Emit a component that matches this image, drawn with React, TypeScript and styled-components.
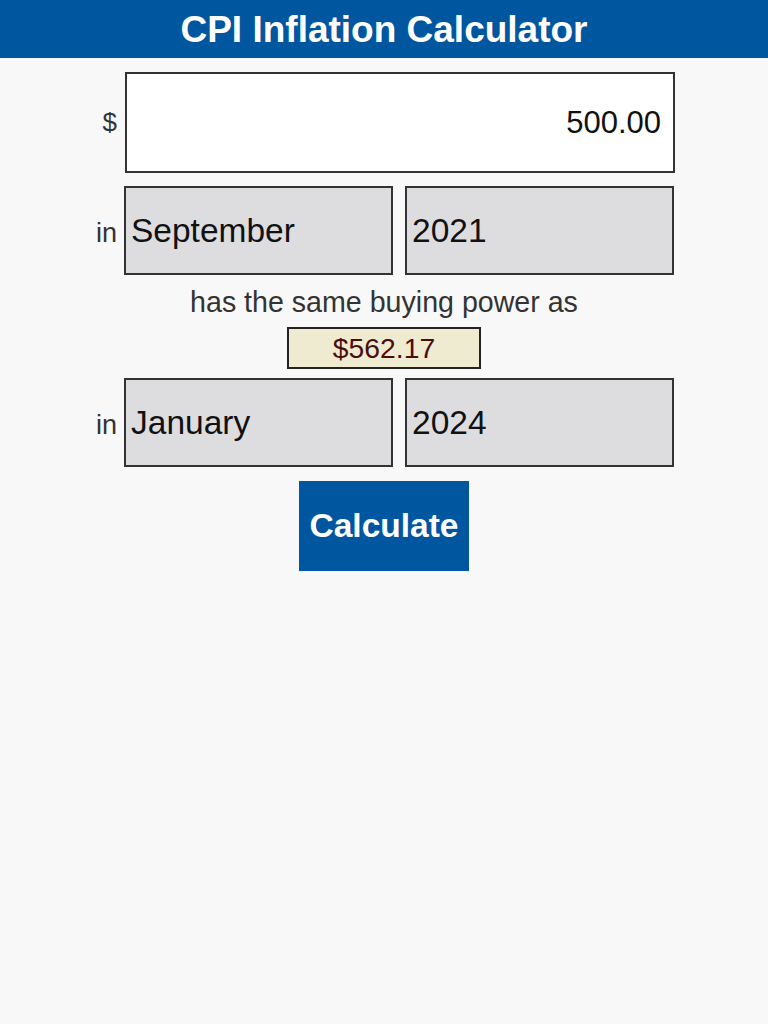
import React, { useState } from "react";
import styled, { createGlobalStyle } from "styled-components";

const GlobalStyle = createGlobalStyle`
  html, body {
    margin: 0;
    padding: 0;
    background: #f8f8f8;
    font-family: "Liberation Sans", Arial, Helvetica, sans-serif;
  }
`;

const Page = styled.div`
  min-height: 1024px;
  display: flex;
  flex-direction: column;
  align-items: center;
  background: #f8f8f8;
`;

const Header = styled.header`
  align-self: stretch;
  height: 58px;
  background: #0156a0;
  display: flex;
  align-items: center;
  justify-content: center;
`;

const Title = styled.h1`
  margin: 0;
  color: #ffffff;
  font-size: 37px;
  font-weight: 700;
  line-height: 1;
`;

const Form = styled.form`
  width: 582px;
  margin-top: 14px;
  display: flex;
  flex-direction: column;
  align-items: center;
`;

const Row = styled.div<{ $gap: number; $height: number }>`
  align-self: stretch;
  margin-top: ${(p) => p.$gap}px;
  display: grid;
  grid-template-columns: 24px 1fr;
  column-gap: 8px;
  height: ${(p) => p.$height}px;
`;

const Label = styled.label<{ $size: number; $drop: number }>`
  display: flex;
  align-items: center;
  justify-content: flex-end;
  padding-top: ${(p) => p.$drop}px;
  color: #333333;
  font-size: ${(p) => p.$size}px;
`;

const AmountInput = styled.input`
  box-sizing: border-box;
  width: 100%;
  height: 100%;
  margin: 0;
  border: 2px solid #333333;
  background: #ffffff;
  color: #111111;
  font-family: inherit;
  font-size: 31px;
  text-align: right;
  padding: 0 12px 0 5px;
  outline: none;
`;

const Pair = styled.div`
  display: grid;
  grid-template-columns: 1fr 1fr;
  column-gap: 12px;
  margin-left: -1px;
  margin-right: 1px;
`;

const Select = styled.select`
  box-sizing: border-box;
  width: 100%;
  height: 100%;
  margin: 0;
  border: 2px solid #333333;
  border-radius: 0;
  background: #dddde0;
  color: #111111;
  font-family: inherit;
  font-size: 33.5px;
  padding: 0 5px;
  appearance: none;
  -webkit-appearance: none;
  outline: none;
`;

const Caption = styled.p`
  margin: 10px 0 0;
  height: 34px;
  line-height: 34px;
  color: #333333;
  font-size: 28.6px;
  text-align: center;
`;

const Result = styled.output`
  box-sizing: border-box;
  margin-top: 8px;
  width: 194px;
  height: 42px;
  border: 2px solid #222222;
  background: #efebd0;
  color: #4b0d0d;
  font-size: 28.3px;
  display: flex;
  align-items: center;
  justify-content: center;
`;

const CalcButton = styled.button`
  margin-top: 14px;
  width: 170px;
  height: 90px;
  border: none;
  border-radius: 0;
  background: #0156a0;
  color: #ffffff;
  font-family: inherit;
  font-size: 33.5px;
  font-weight: 700;
  cursor: pointer;
`;

const MONTHS = [
  "January", "February", "March", "April", "May", "June",
  "July", "August", "September", "October", "November", "December",
];
const YEARS = Array.from({ length: 2024 - 1913 + 1 }, (_, i) => String(1913 + i));

export default function App() {
  const [amount, setAmount] = useState("500.00");
  const [fromMonth, setFromMonth] = useState("September");
  const [fromYear, setFromYear] = useState("2021");
  const [toMonth, setToMonth] = useState("January");
  const [toYear, setToYear] = useState("2024");

  return (
    <Page>
      <GlobalStyle />
      <Header>
        <Title>CPI Inflation Calculator</Title>
      </Header>
      <Form onSubmit={(e) => e.preventDefault()}>
        <Row $gap={0} $height={101}>
          <Label $size={26} $drop={0}>$</Label>
          <AmountInput value={amount} onChange={(e) => setAmount(e.target.value)} />
        </Row>
        <Row $gap={13} $height={89}>
          <Label $size={27} $drop={5}>in</Label>
          <Pair>
            <Select value={fromMonth} onChange={(e) => setFromMonth(e.target.value)}>
              {MONTHS.map((m) => <option key={m}>{m}</option>)}
            </Select>
            <Select value={fromYear} onChange={(e) => setFromYear(e.target.value)}>
              {YEARS.map((y) => <option key={y}>{y}</option>)}
            </Select>
          </Pair>
        </Row>
        <Caption>has the same buying power as</Caption>
        <Result>$562.17</Result>
        <Row $gap={9} $height={89}>
          <Label $size={27} $drop={5}>in</Label>
          <Pair>
            <Select value={toMonth} onChange={(e) => setToMonth(e.target.value)}>
              {MONTHS.map((m) => <option key={m}>{m}</option>)}
            </Select>
            <Select value={toYear} onChange={(e) => setToYear(e.target.value)}>
              {YEARS.map((y) => <option key={y}>{y}</option>)}
            </Select>
          </Pair>
        </Row>
        <CalcButton type="submit">Calculate</CalcButton>
      </Form>
    </Page>
  );
}
